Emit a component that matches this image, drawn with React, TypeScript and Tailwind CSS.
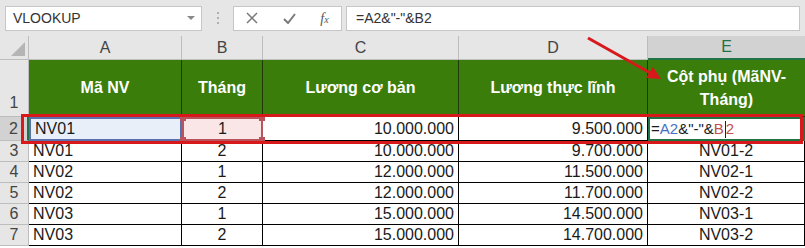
const rows = [
  ["NV01", "2", "10.000.000", "9.700.000", "NV01-2"],
  ["NV02", "1", "12.000.000", "11.500.000", "NV02-1"],
  ["NV02", "2", "12.000.000", "11.700.000", "NV02-2"],
  ["NV03", "1", "15.000.000", "14.500.000", "NV03-1"],
  ["NV03", "2", "15.000.000", "14.700.000", "NV03-2"],
];

const cols = ["A", "B", "C", "D", "E"];

function Handle({ className }: { className: string }) {
  return <span className={`absolute w-[6px] h-[6px] bg-[#b9545c] ${className}`} />;
}

export default function App() {
  return (
    <div
      className="relative w-[805px] h-[248px] overflow-hidden bg-white text-[#1a1a1a]"
      style={{ fontFamily: '"Liberation Sans", Arial, sans-serif' }}
    >
      {/* Formula bar */}
      <div className="flex items-center h-[36px] bg-[#e6e6e6] px-[5px]">
        <div className="flex items-center justify-between w-[197px] h-[25px] bg-white border border-[#c6c6c6] pl-[7px] pr-[6px] text-[14px] text-[#333]">
          <span>VLOOKUP</span>
          <span className="w-0 h-0 border-l-[4px] border-r-[4px] border-t-[4px] border-l-transparent border-r-transparent border-t-[#8a8a8a]" />
        </div>
        <div className="w-[31px] flex flex-col items-center justify-center gap-[3px]">
          <span className="w-[2px] h-[2px] bg-[#b0b0b0]" />
          <span className="w-[2px] h-[2px] bg-[#b0b0b0]" />
          <span className="w-[2px] h-[2px] bg-[#b0b0b0]" />
        </div>
        <div className="flex items-center justify-around w-[109px] h-[25px] bg-white border border-[#c6c6c6]">
          <svg width="12" height="12" viewBox="0 0 12 12">
            <path d="M1 1 L11 11 M11 1 L1 11" stroke="#7a7a7a" strokeWidth="1.5" />
          </svg>
          <svg width="13" height="11" viewBox="0 0 13 11">
            <path d="M1 6 L5 10 L12 1" stroke="#7a7a7a" strokeWidth="2" fill="none" />
          </svg>
          <span className="italic text-[14px] text-[#555]" style={{ fontFamily: '"Liberation Serif", serif' }}>
            f<span className="text-[10px]">x</span>
          </span>
        </div>
        <div className="flex-1 ml-[4px] h-[25px] bg-white border border-[#c6c6c6] flex items-center pl-[9px] text-[14px] text-[#333]">
          =A2&amp;"-"&amp;B2
        </div>
      </div>

      {/* Sheet grid */}
      <div className="grid grid-cols-[29px_153px_81px_196px_189px_157px] grid-rows-[24px_57px_24px_21px_21px_21px_21px_21px]">
        {/* corner */}
        <div className="relative bg-[#e6e6e6] border-r border-b border-[#bdbdbd]">
          <span className="absolute right-[3px] bottom-[3px] w-0 h-0 border-l-[14px] border-l-transparent border-b-[14px] border-b-[#b5b5b5]" />
        </div>
        {cols.map((c) =>
          c === "E" ? (
            <div
              key={c}
              className="flex items-center justify-center bg-[#d2d2d2] border-b-2 border-[#217346] text-[16px] text-[#217346]"
            >
              {c}
            </div>
          ) : (
            <div
              key={c}
              className="flex items-center justify-center bg-[#e6e6e6] border-r border-b border-[#bdbdbd] text-[16px] text-[#444]"
            >
              {c}
            </div>
          )
        )}

        {/* Row 1 header */}
        <div className="flex items-end justify-center pb-[1px] bg-[#e6e6e6] border-r border-b border-[#bdbdbd] text-[16px] text-[#444]">
          1
        </div>
        {["Mã NV", "Tháng", "Lương cơ bản", "Lương thực lĩnh"].map((h) => (
          <div
            key={h}
            className="flex items-center justify-center bg-[#3a7d0b] border-r border-b border-[#1f3a08] text-white font-bold text-[16px]"
          >
            {h}
          </div>
        ))}
        <div className="flex items-center justify-center text-center bg-[#3a7d0b] border-b border-[#1f3a08] text-white font-bold text-[16px] leading-[23px] px-1">
          Cột phụ (MãNV-
          <br />
          Tháng)
        </div>

        {/* Row 2 */}
        <div className="flex items-center justify-center bg-[#d2d2d2] border-r-2 border-r-[#217346] border-b border-[#bdbdbd] text-[16px] text-[#444]">
          2
        </div>
        <div className="flex items-center pl-[4px] bg-[#e9eff9] border-2 border-[#5a70ad] text-[16px]">NV01</div>
        <div className="relative flex items-center justify-center bg-[#fbe6e7] border-2 border-[#b9545c] text-[16px]">
          1
          <Handle className="-left-[4px] -top-[4px]" />
          <Handle className="-right-[4px] -top-[4px]" />
          <Handle className="-left-[4px] -bottom-[4px]" />
          <Handle className="-right-[4px] -bottom-[4px]" />
        </div>
        <div className="flex items-center justify-end pr-[4px] border-r border-b border-black text-[16px]">10.000.000</div>
        <div className="flex items-center justify-end pr-[4px] border-r border-b border-black text-[16px]">9.500.000</div>
        <div className="flex items-center pl-[1px] border-2 border-[#217346] text-[15px]">
          =<span className="text-[#4472c4]">A2</span>&amp;"-"&amp;<span className="text-[#c0504d]">B</span>
          <span className="inline-block w-px h-[17px] bg-[#222] ml-px" />
          <span className="text-[#c0504d]">2</span>
        </div>

        {/* Rows 3-7 */}
        {rows.map((r, i) => (
          <div key={i} className="contents">
            <div className="flex items-center justify-center bg-[#e6e6e6] border-r border-b border-[#bdbdbd] text-[16px] text-[#444]">
              {i + 3}
            </div>
            <div className="flex items-center pl-[4px] border-r border-b border-black text-[16px] leading-none">{r[0]}</div>
            <div className="flex items-center justify-center border-r border-b border-black text-[16px] leading-none">{r[1]}</div>
            <div className="flex items-center justify-end pr-[4px] border-r border-b border-black text-[16px] leading-none">{r[2]}</div>
            <div className="flex items-center justify-end pr-[4px] border-r border-b border-black text-[16px] leading-none">{r[3]}</div>
            <div className="flex items-center justify-center border-r border-b border-black text-[16px] leading-none">{r[4]}</div>
          </div>
        ))}
      </div>

      {/* Red annotation box around row 2 */}
      <div className="absolute left-[21px] top-[114px] w-[782px] h-[30px] border-[3px] border-[#d7191c] pointer-events-none" />

      {/* Red arrow */}
      <svg className="absolute left-0 top-0 pointer-events-none" width="805" height="248">
        <line x1="588" y1="38" x2="652" y2="74" stroke="#d7191c" strokeWidth="3" />
        <polygon points="661,79 646,78 653,67" fill="#d7191c" />
      </svg>
    </div>
  );
}
